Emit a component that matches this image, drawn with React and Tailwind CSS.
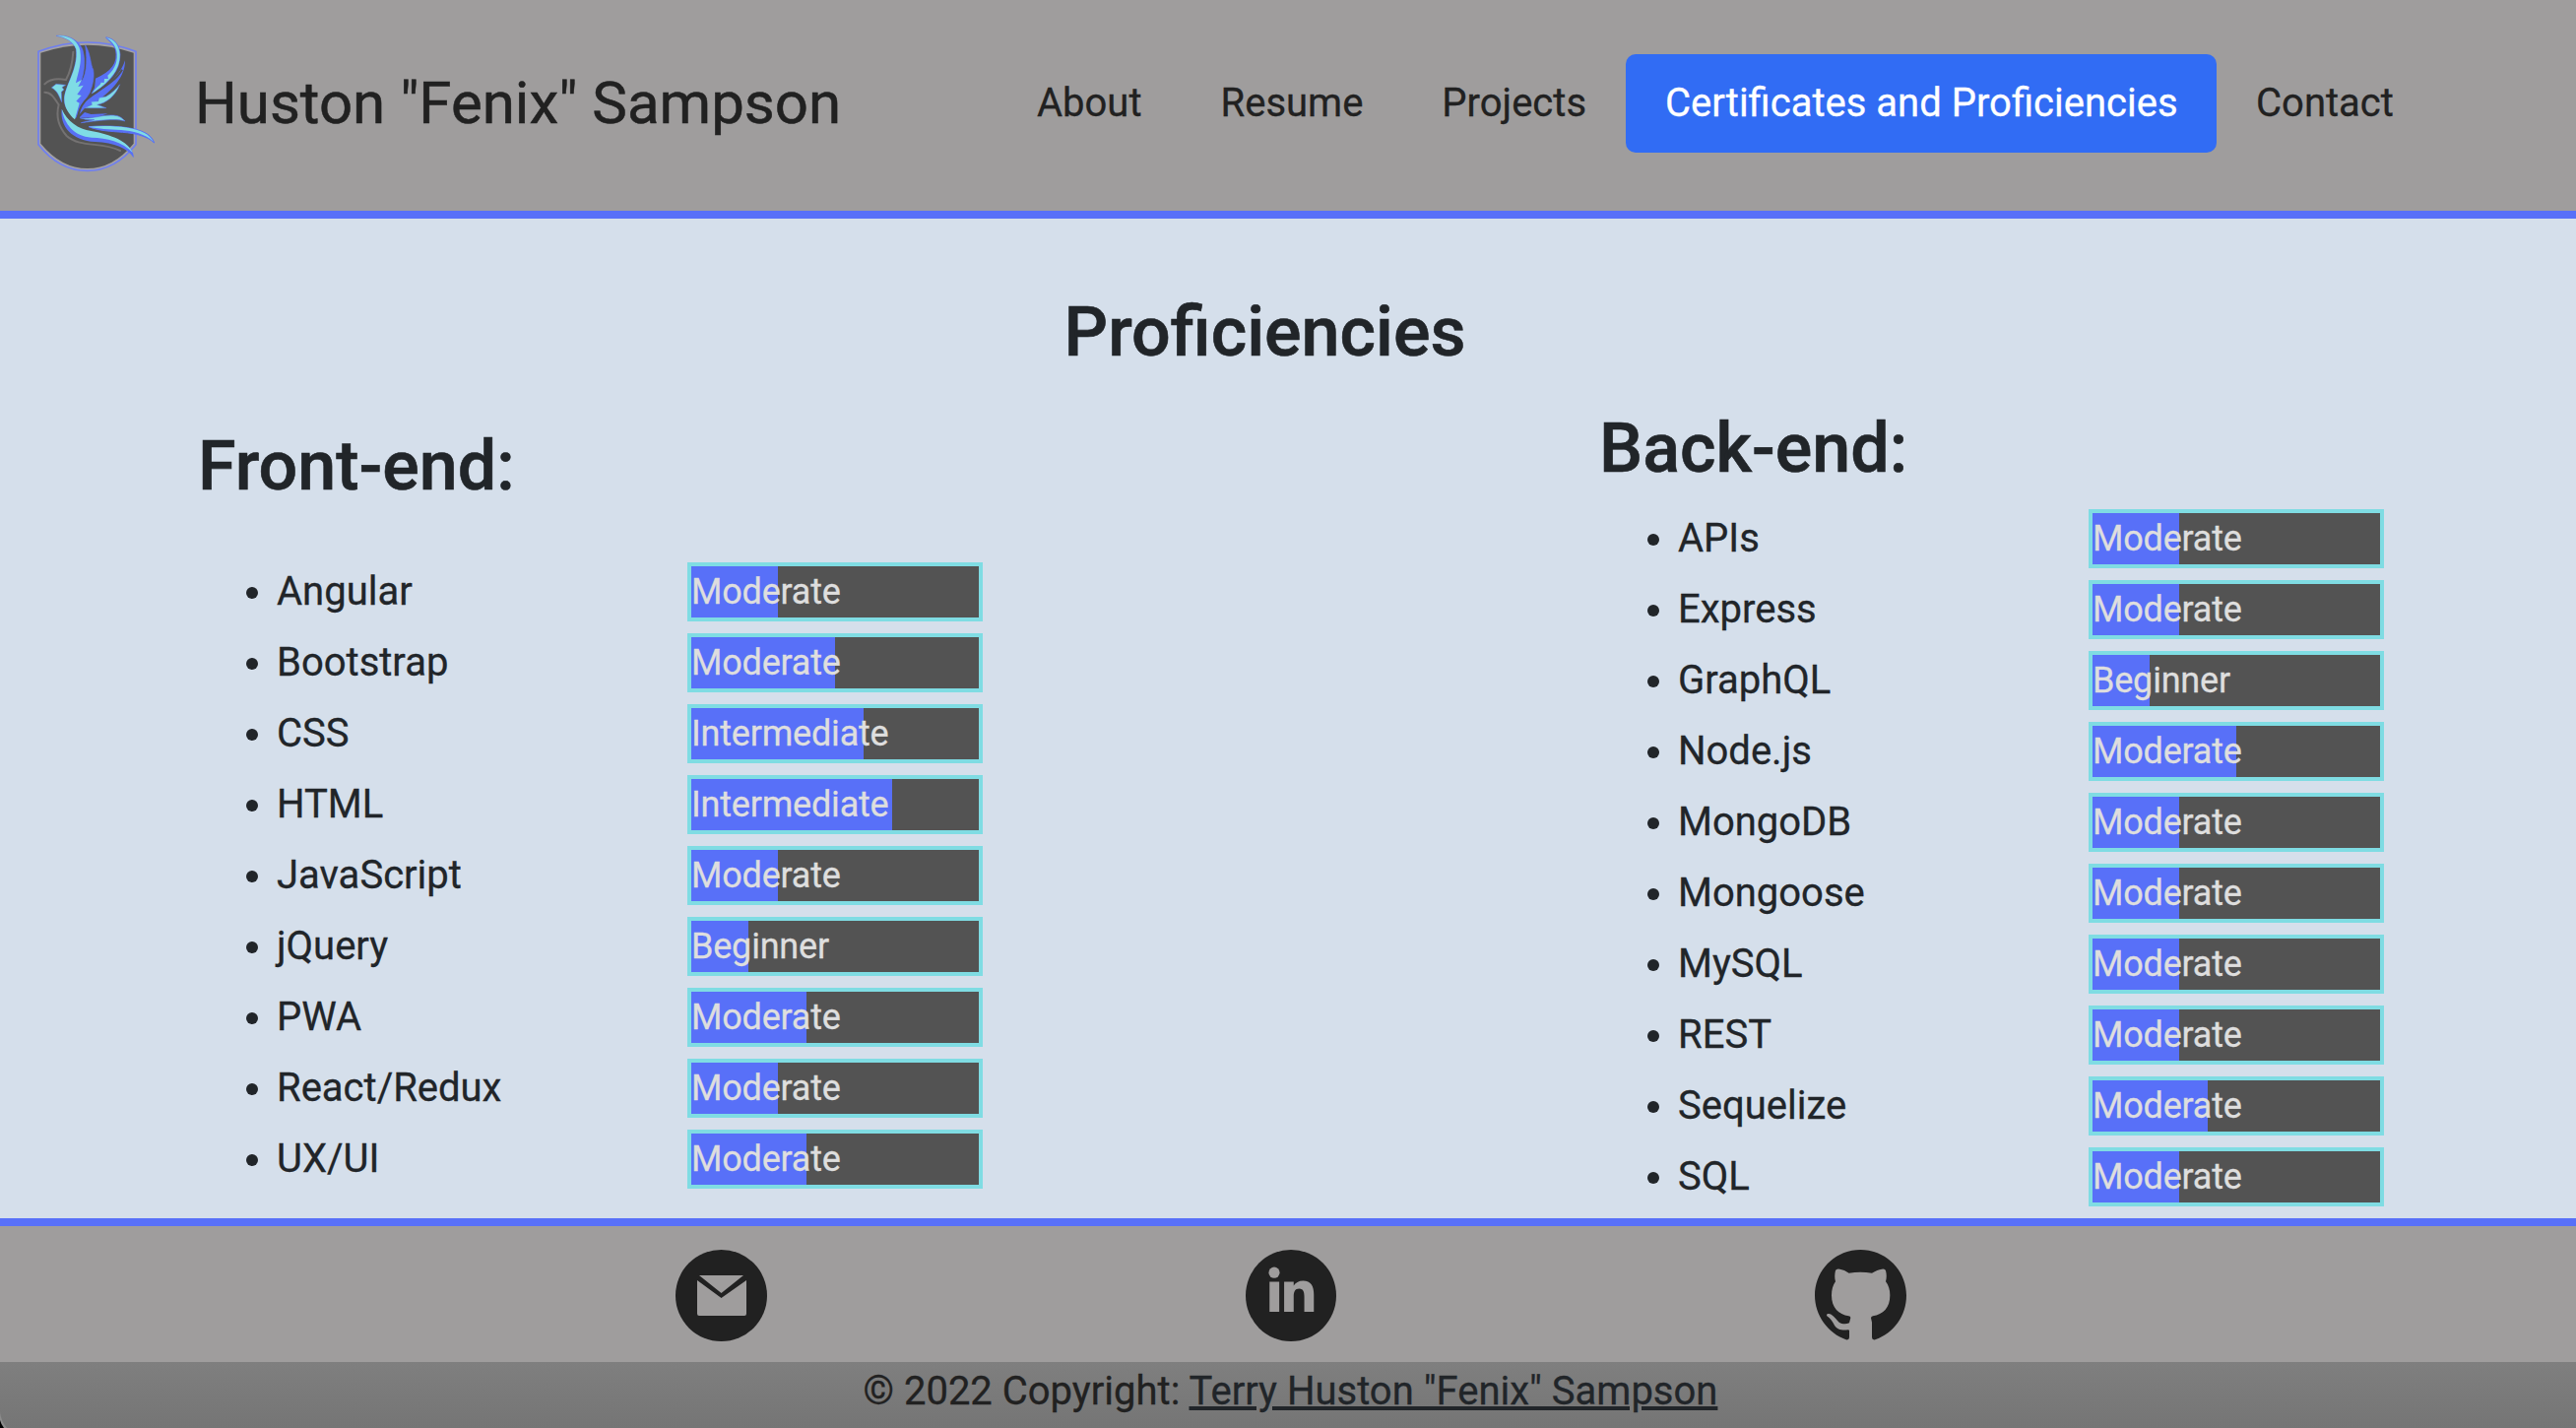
const frontEnd = [
  ["Angular", "Moderate", 30],
  ["Bootstrap", "Moderate", 50],
  ["CSS", "Intermediate", 60],
  ["HTML", "Intermediate", 70],
  ["JavaScript", "Moderate", 30],
  ["jQuery", "Beginner", 20],
  ["PWA", "Moderate", 40],
  ["React/Redux", "Moderate", 30],
  ["UX/UI", "Moderate", 40],
];

const backEnd = [
  ["APIs", "Moderate", 30],
  ["Express", "Moderate", 30],
  ["GraphQL", "Beginner", 20],
  ["Node.js", "Moderate", 50],
  ["MongoDB", "Moderate", 30],
  ["Mongoose", "Moderate", 30],
  ["MySQL", "Moderate", 30],
  ["REST", "Moderate", 30],
  ["Sequelize", "Moderate", 40],
  ["SQL", "Moderate", 30],
];

const navItems = ["About", "Resume", "Projects", "Certificates and Proficiencies", "Contact"];

function Logo() {
  return (
    <svg viewBox="0 0 594 642" className="h-[214px] w-[198px] shrink-0" fill="none">
      <path d="M117 157Q266 101 414 157V440Q350 520 266 520Q180 520 117 440Z" fill="#a3a1a4" stroke="#6f7ff0" strokeWidth="5" />
      <path d="M124 161Q266 113 407 161V437Q345 513 266 513Q187 513 124 437Z" fill="#535353" />
      <g stroke="#747272" strokeWidth="6" strokeLinecap="round">
        <path d="M223 158C221 190 214 220 201 243C177 239 153 239 136 256" />
        <path d="M136 281C157 281 166 300 179 319C171 350 177 385 203 414C246 452 310 430 366 459" />
      </g>
      <path d="M172 109C213 105 243 127 252 153C262 190 255 226 246 250C262 236 268 190 260 138C277 165 275 198 284 212C288 240 281 262 273 283L262 300L230 360C207 342 196 324 196 303C196 263 240 210 232 150C225 129 202 114 172 109Z" fill="#5870f5" stroke="#5870f5" strokeWidth="2" />
      <path d="M172 109C213 105 239 126 244 154C250 193 239 218 231 253L249 243L238 264L254 260L235 288L248 291L232 308L242 314L228 364C208 347 196 325 196 303C196 263 240 210 232 150C225 129 202 114 172 109Z" fill="#7fdce5" />
      <path d="M293 240C341 219 362 192 353 151C346 131 335 124 323 114C350 120 363 140 365 166C366 216 331 251 280 286L290 268Z" fill="#5870f5" stroke="#5870f5" strokeWidth="4" />
      <path d="M323 114C351 120 363 139 365 166C366 216 331 251 280 286C294 262 304 263 308 251L317 252L318 240L330 240L328 230C352 209 360 183 355 155C349 134 338 124 323 114Z" fill="#7fdce5" />
      <path d="M381 184C382 235 340 276 299 306C285 318 270 322 257 331L237 354C238 335 250 313 272 300C312 272 362 240 381 184Z" fill="#5870f5" />
      <path d="M365 257C352 293 323 314 296 319L324 329H257L280 319L278 310L299 308L302 298L323 294C340 284 354 271 365 257Z" fill="#7fdce5" stroke="#5870f5" strokeWidth="1.5" />
      <path d="M372 212C352 248 308 270 274 294C252 311 242 328 236 362" stroke="#535353" strokeWidth="6" />
      <path d="M157 267L171 256L200 259L189 266L195 273L187 280L188 311C179 291 175 277 157 267Z" fill="#7fdce5" stroke="#5870f5" strokeWidth="1.5" />
      <path d="M242 358L258 342L277 348L328 346C304 356 277 361 242 358Z" fill="#5870f5" />
      <path d="M243 359C279 364 300 351 338 351C361 351 370 357 381 369C352 361 318 365 247 374Q270 368 287 365Q260 366 243 359Z" fill="#7fdce5" stroke="#5870f5" strokeWidth="2" />
      <path d="M188 332C202 366 231 401 287 409C337 415 376 428 397 452C405 463 408 471 407 481C389 451 349 435 290 432C219 427 182 386 188 332Z" fill="#5870f5" />
      <path d="M188 332C205 369 238 393 278 399C341 411 389 430 404 465C371 430 326 420 279 419C225 415 196 377 188 332Z" fill="#7fdce5" />
      <path d="M270 386C326 381 409 385 443 405C458 413 465 423 470 435C449 415 414 406 373 403C339 400 302 399 270 386Z" fill="#5870f5" stroke="#5870f5" strokeWidth="3" />
      <path d="M270 386C326 381 402 384 440 405C453 412 461 421 467 431C445 409 402 398 369 396C330 393 302 393 270 386Z" fill="#7fdce5" />
    </svg>
  );
}

function SkillRow({ skill }) {
  const [name, level, percent] = skill;
  return (
    <li className="flex h-[72px] items-start">
      <span className="mt-[25px] ml-[50px] size-3 rounded-full bg-[#212529]" />
      <span className="ml-[19px] w-[417px] text-[40px] leading-[60px]">{name}</span>
      <div className="h-[60px] w-[300px] border-4 border-[#7fdce3] bg-[#535353]">
        <div
          className="h-full bg-[#5870f8] text-[36px] leading-[52px] tracking-[-0.2px] whitespace-nowrap text-[#dedede] [-webkit-text-stroke:0.3px]"
          style={{ width: `${percent}%` }}
        >
          {level}
        </div>
      </div>
    </li>
  );
}

function SkillColumn({ title, skills, className, listClassName }) {
  return (
    <section className={className}>
      <h3 className="pl-px text-[70px] leading-[84px] font-medium [-webkit-text-stroke:0.6px]">{title}</h3>
      <ul className={listClassName}>
        {skills.map((skill) => (
          <SkillRow key={skill[0]} skill={skill} />
        ))}
      </ul>
    </section>
  );
}

function MailIcon() {
  return (
    <svg viewBox="0 0 93 93" className="size-[93px]">
      <circle cx="46.5" cy="46.5" r="46.5" fill="#212121" />
      <path d="M24 26H69L46.5 44Z" fill="#9f9d9d" />
      <path d="M22 31L46.5 49L72 31V65Q72 67 70 67H24Q22 67 22 65Z" fill="#9f9d9d" />
    </svg>
  );
}

function LinkedInIcon() {
  return (
    <svg viewBox="0 0 93 93" className="h-[93px] w-[92px]" preserveAspectRatio="none">
      <circle cx="46.5" cy="46.5" r="46.5" fill="#212121" />
      <g fill="#9f9d9d">
        <circle cx="29.3" cy="23.2" r="5.6" />
        <path d="M24.5 32.5H34.5V63H24.5Z" />
        <path d="M39.5 32.5H49.3V36.5C51 33.5 54.5 31.5 59 31.5C67 31.5 70 37 70 45.5V63H60.2V48C60.2 43 59.3 39.5 55 39.5C50.5 39.5 49.3 43 49.3 47.5V63H39.5Z" />
      </g>
    </svg>
  );
}

function GitHubIcon() {
  return (
    <svg viewBox="129 148 279 279" className="size-[93px]">
      <path
        fill="#212121"
        d="M268 148C191 148 129 210 129 287C129 349 169 402 224 422Q234 424 234 415V395Q234 392 230 392C210 394 197 391 189 378C183 367 177 357 166 350C162 343 172 341 179 345C190 352 195 362 203 369C213 375 224 375 234 371L238 355Q238 350 232 350C202 345 180 325 180 287C180 270 184 257 192 245C189 235 189 223 192 211Q195 205 205 207Q219 209 233 219Q268 213 303 219Q320 208 333 207Q343 205 345 212C348 224 348 233 345 245C354 256 358 271 358 287C358 325 337 345 306 350Q300 351 300 356L303 369V415Q303 424 313 422C369 403 408 350 408 287C408 210 345 148 268 148Z"
      />
    </svg>
  );
}

export default function App() {
  return (
    <div className="relative flex h-[1450px] w-[2616px] flex-col overflow-hidden bg-[#d5dfeb] font-['Roboto',sans-serif] text-[#212529] [-webkit-text-stroke:0.3px]">
      <header className="flex h-[222px] shrink-0 border-b-8 border-[#5870f8] bg-[#9f9d9d] text-[#212121]">
        <Logo />
        <h1 className="mt-[60px] w-[815px] text-[60px] leading-[90px] whitespace-nowrap [-webkit-text-stroke:0.5px]">
          Huston "Fenix" Sampson
        </h1>
        <nav className="mt-[55px] flex h-[100px] text-[40px] leading-[60px] whitespace-nowrap">
          {navItems.map((item) => (
            <a
              key={item}
              className={
                item === "Certificates and Proficiencies"
                  ? "w-[600px] rounded-[10px] bg-[#316cf4] px-10 py-5 text-white"
                  : "px-10 py-5"
              }
            >
              {item}
            </a>
          ))}
        </nav>
      </header>

      <main className="h-[1015px] shrink-0">
        <h2 className="w-[2569px] pt-[73px] text-center text-[70px] leading-[84px] font-medium [-webkit-text-stroke:0.6px]">
          Proficiencies
        </h2>
        <div className="flex">
          <SkillColumn title="Front-end:" skills={frontEnd} className="ml-[200px] w-[1423px] pt-[52px]" listClassName="mt-14" />
          <SkillColumn title="Back-end:" skills={backEnd} className="w-[800px] pt-[34px]" listClassName="mt-5" />
        </div>
      </main>

      <footer className="shrink-0 border-t-8 border-[#5870f8]">
        <div className="flex h-[138px] gap-[486px] bg-[#9f9d9d] pt-6 pl-[686px]">
          <MailIcon />
          <LinkedInIcon />
          <GitHubIcon />
        </div>
        <div className="h-[67px] bg-linear-to-b from-[#7f7f7f] to-[#757575] pl-[5px] text-center text-[40px] leading-[60px] text-[#212121]">
          © 2022 Copyright: <a className="text-[#212529] underline">Terry Huston "Fenix" Sampson</a>
        </div>
      </footer>
      <svg viewBox="0 0 8 16" className="absolute bottom-0 left-0 h-4 w-2">
        <path d="M0 0Q1 9 7 16H0Z" fill="#8c8c8c" />
        <path d="M0 8Q1 12 4 16H0Z" fill="#000" />
      </svg>
    </div>
  );
}
